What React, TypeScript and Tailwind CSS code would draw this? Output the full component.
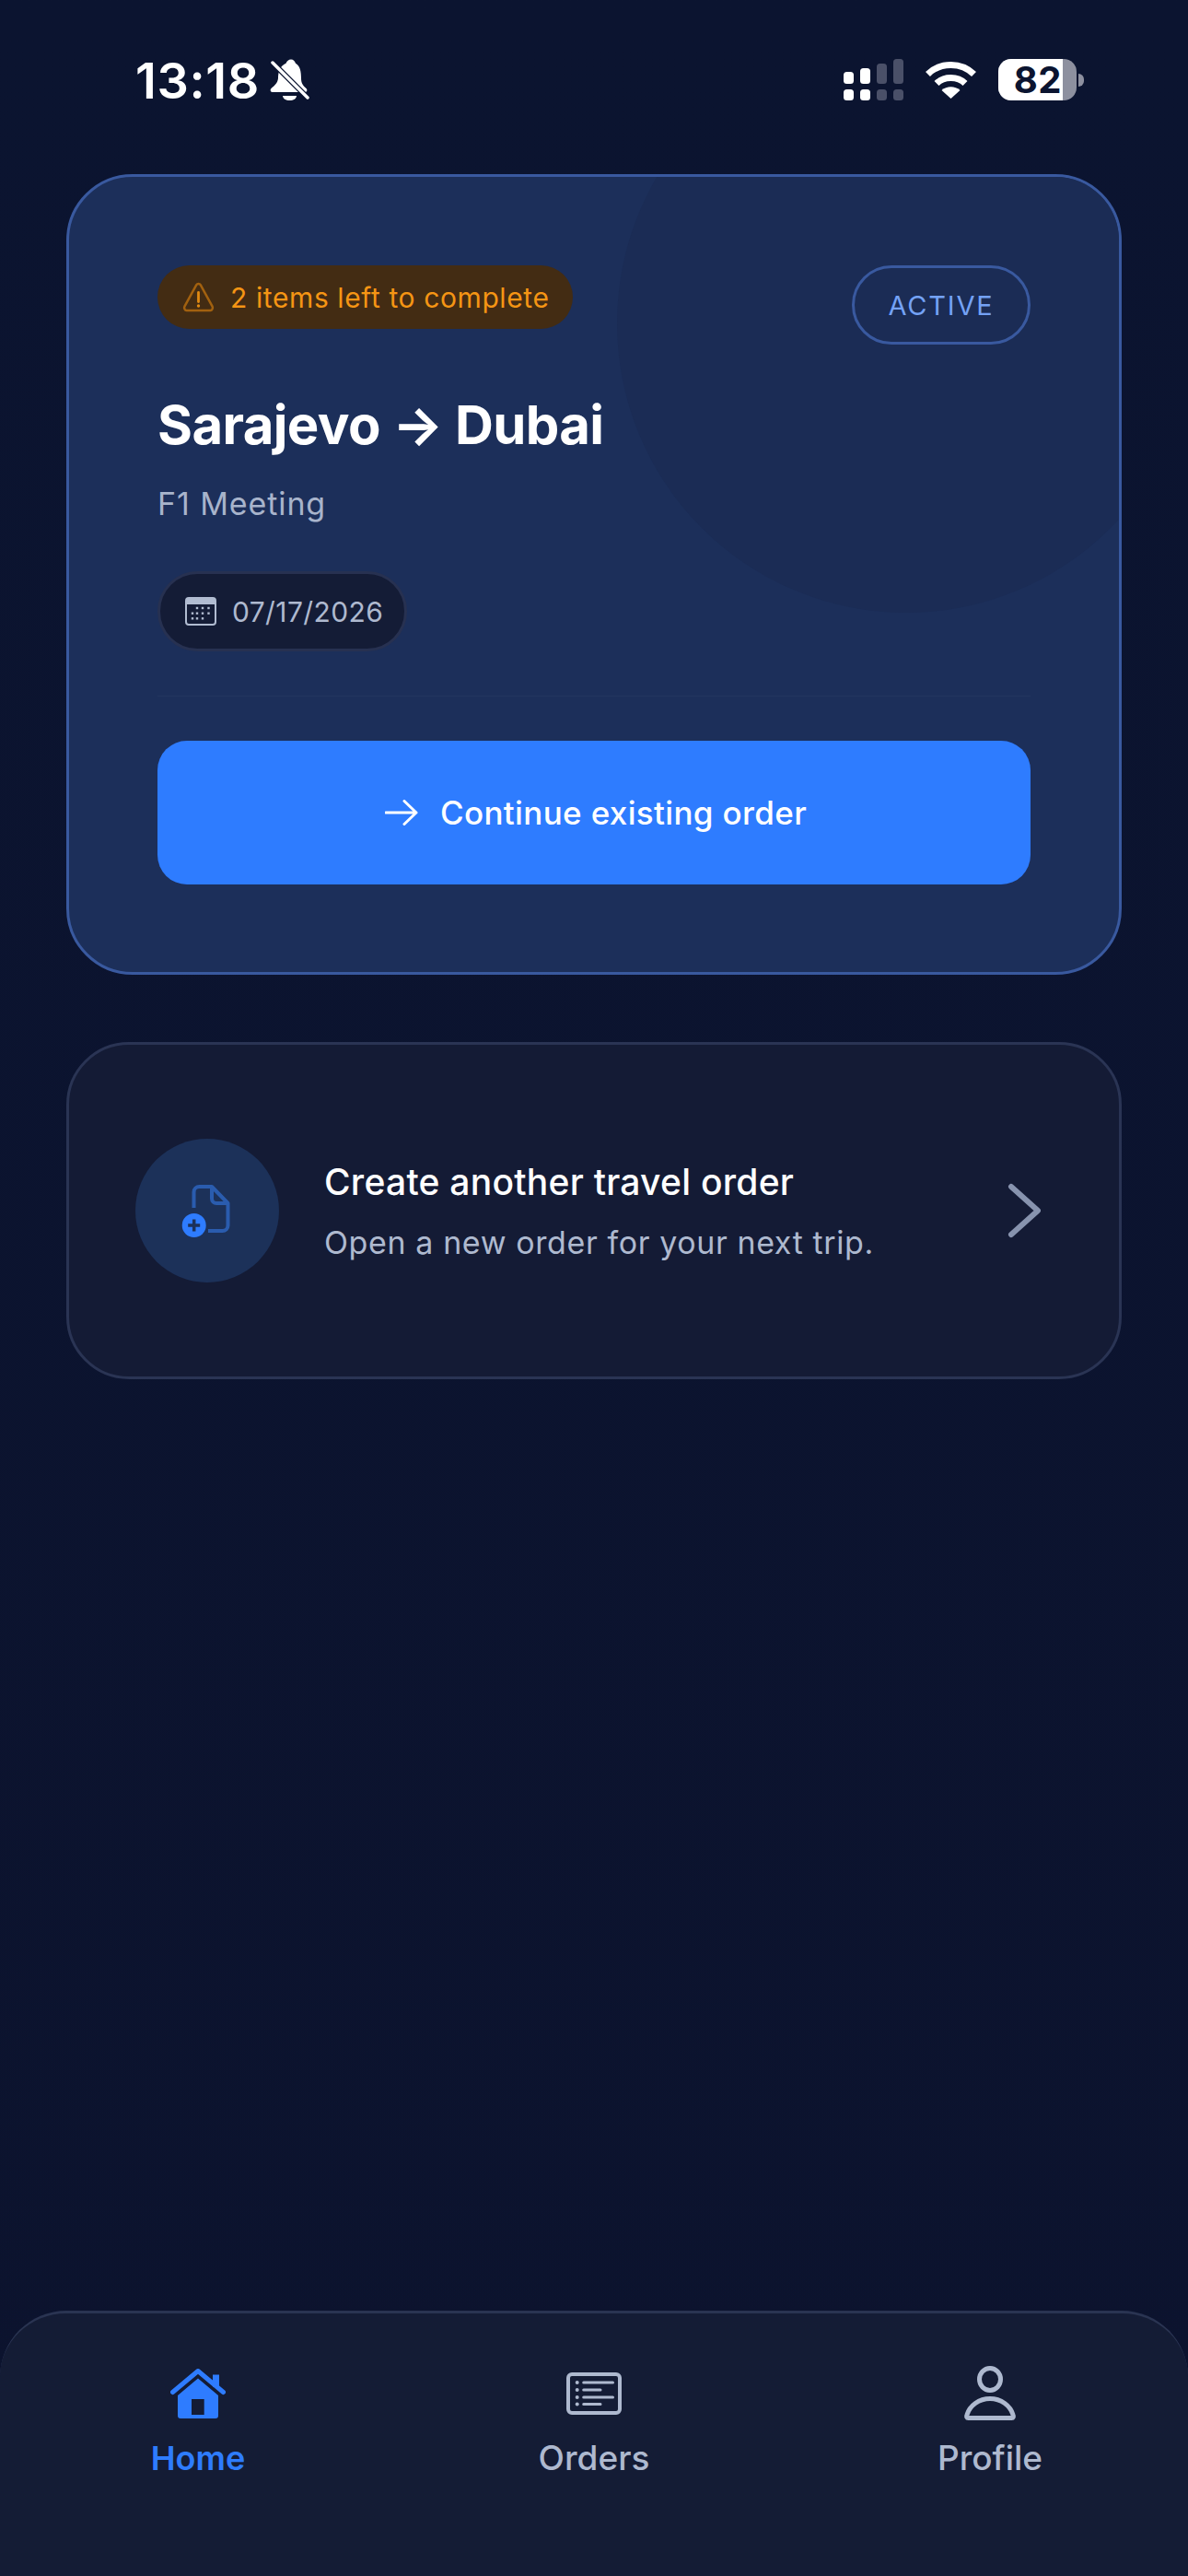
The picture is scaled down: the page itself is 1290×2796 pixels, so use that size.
const font = { fontFamily: "Inter, 'Noto Sans', sans-serif" };

function BellOff() {
  return (
    <svg width="43" height="45" viewBox="0 0 43 45" fill="none">
      <path
        d="M23 0.5c-2.5 0-4.5 1.8-5.5 4.2C11 7.5 9 14 9 21c-.5 5-4 8-7.5 11C0 33.5.5 36 3 36h35c2.500 0 3-2.500 1.500-4-3.500-3-5.500-6-5.500-11 0-7-1-13.500-6-16.300C27 2.300 25.500.5 23 .5z"
        fill="#fff"
      />
      <path d="M14 40h15c0 3-3.500 5-7.500 5S14 43 14 40z" fill="#fff" />
      <path d="M-1 0L40 41" stroke="#0b1430" strokeWidth="6" />
      <path d="M3 4L41 42" stroke="#fff" strokeWidth="3.500" strokeLinecap="round" />
    </svg>
  );
}

function Signal() {
  return (
    <svg width="65" height="45" viewBox="0 0 65 45">
      <rect x="0" y="33" width="11" height="12" rx="3.500" fill="#fff" />
      <rect x="18" y="33" width="11" height="12" rx="3.500" fill="#fff" />
      <rect x="36" y="33" width="11" height="12" rx="3.500" fill="#4a5068" />
      <rect x="54" y="33" width="11" height="12" rx="3.500" fill="#4a5068" />
      <rect x="0" y="14" width="11" height="13" rx="3.500" fill="#fff" />
      <rect x="18" y="10" width="11" height="17" rx="3.500" fill="#fff" />
      <rect x="36" y="5" width="11" height="22" rx="3.500" fill="#4a5068" />
      <rect x="54" y="0" width="11" height="27" rx="3.500" fill="#4a5068" />
    </svg>
  );
}

function Wifi() {
  return (
    <svg width="57" height="42" viewBox="0 0 57 42" fill="none">
      <path d="M3.500 15.500C17 2 40 2 53.500 15.500" stroke="#fff" strokeWidth="7" />
      <path d="M13 25.500C21 17.500 36 17.500 44 25.500" stroke="#fff" strokeWidth="7" />
      <path d="M28.500 42L18.500 33C24 28 33 28 38.500 33z" fill="#fff" />
    </svg>
  );
}

function WarningIcon() {
  return (
    <svg width="35" height="33" viewBox="0 0 35 33" fill="none">
      <path
        d="M15.300 3.200c1-1.600 3.400-1.600 4.400 0l12.900 23.500c.9 1.700-.3 4.300-2.200 4.300H4.600c-1.900 0-3.100-2.600-2.200-4.300z"
        stroke="#a2610f"
        strokeWidth="2.500"
      />
      <path d="M17.500 11.500v10" stroke="#e08a12" strokeWidth="2.800" strokeLinecap="round" />
      <circle cx="17.500" cy="26" r="1.700" fill="#e08a12" />
    </svg>
  );
}

function CalendarIcon() {
  return (
    <svg width="34" height="31" viewBox="0 0 34 31" fill="none">
      <rect x="1" y="1" width="32" height="29" rx="3" stroke="#b1bcd1" strokeWidth="2" />
      <path d="M1 4a3 3 0 0 1 3-3h26a3 3 0 0 1 3 3v4H1z" fill="#b1bcd1" />
      {[
        [13, 12],
        [19, 12],
        [25.5, 12],
        [8, 17.7],
        [13, 17.7],
        [19, 17.7],
        [25.5, 17.7],
        [8, 23.3],
        [13, 23.3],
        [19, 23.3],
      ].map(([cx, cy]) => (
        <rect key={`${cx}-${cy}`} x={cx - 1.2} y={cy - 1.2} width="2.400" height="2.400" fill="#b1bcd1" />
      ))}
    </svg>
  );
}

function ArrowIcon() {
  return (
    <svg width="36" height="28" viewBox="0 0 36 28" fill="none">
      <path d="M1 14H34M21 1.500L34 14 21 26.500" stroke="#fff" strokeWidth="3" strokeLinecap="round" strokeLinejoin="round" />
    </svg>
  );
}

function DocPlusIcon() {
  return (
    <svg width="56" height="60" viewBox="0 0 56 60" fill="none">
      <path
        d="M15.500 27V10a6 6 0 0 1 6-6H35l17.500 18v24a6 6 0 0 1-6 6H31"
        stroke="#2a5cae"
        strokeWidth="4"
        strokeLinejoin="round"
      />
      <path d="M35 4V17a5 5 0 0 0 5 5H52.500" stroke="#2a5cae" strokeWidth="4" />
      <circle cx="15.700" cy="46" r="13" fill="#2e7cff" />
      <path d="M15.700 39.500v13M9.200 46h13" stroke="#1c3159" strokeWidth="3.500" />
    </svg>
  );
}

function HomeIcon() {
  return (
    <svg width="60" height="54" viewBox="0 0 60 54" fill="none">
      <path d="M46 6.500h7v13h-7z" fill="#2e7cff" />
      <path d="M2.500 25.500L30 2.500l27.500 23" stroke="#2e7cff" strokeWidth="5" strokeLinecap="round" strokeLinejoin="round" />
      <path
        d="M30 10.500L52 29v22a3 3 0 0 1-3 3H11a3 3 0 0 1-3-3V29zM23 33v17h13.700V33z"
        fill="#2e7cff"
        fillRule="evenodd"
      />
    </svg>
  );
}

function OrdersIcon() {
  return (
    <svg width="60" height="46" viewBox="0 0 60 46" fill="none" stroke="#aeb9cf">
      <rect x="2" y="2" width="56" height="42" rx="4" strokeWidth="4" />
      <path d="M18.700 11H50.500M18.700 19H37M18.700 27H50.500M18.700 34.500H37" strokeWidth="3" strokeLinecap="round" />
      <g fill="#aeb9cf" stroke="none">
        <circle cx="11.700" cy="11" r="2" />
        <circle cx="11.700" cy="19" r="2" />
        <circle cx="11.700" cy="27" r="2" />
        <circle cx="11.700" cy="34.500" r="2" />
      </g>
    </svg>
  );
}

function ProfileIcon() {
  return (
    <svg width="56" height="60" viewBox="0 0 56 60" fill="none" stroke="#aeb9cf" strokeWidth="5">
      <ellipse cx="28" cy="14.500" rx="11.500" ry="12" />
      <path d="M4.500 56.500C2.700 56.500 2.300 55 3 53 6 43 16 35.500 28 35.500S50 43 53 53c.7 2 .3 3.500-1.500 3.500z" strokeLinejoin="round" />
    </svg>
  );
}

const tabs = [
  { label: "Home", icon: <HomeIcon />, color: "text-[#2e7cff] font-semibold text-[36px]" },
  { label: "Orders", icon: <OrdersIcon />, color: "text-[#aeb9cf] font-medium text-[37px]" },
  { label: "Profile", icon: <ProfileIcon />, color: "text-[#aeb9cf] font-medium text-[37px]" },
];

export default function App() {
  return (
    <div
      style={font}
      className="flex h-[2796px] w-[1290px] flex-col overflow-hidden bg-gradient-to-b from-[#0b1430] to-[#0c132e]"
    >
      <header className="flex h-[189px] shrink-0 items-start justify-between pl-[147px] pr-[113px] pt-[64px]">
        <div className="flex items-start gap-[13px]">
          <span className="w-[133px] text-[54px] font-semibold leading-[47px] tracking-[0.6px] text-white">13:18</span>
          <BellOff />
        </div>
        <div className="flex items-start">
          <Signal />
          <div className="ml-[23px] pt-[1px]">
            <Wifi />
          </div>
          <div className="ml-[23px] flex items-center">
            <div className="flex h-[45px] w-[85px] rounded-[14px] bg-[#8d909f]">
              <div className="flex h-full w-[70px] items-center justify-end rounded-l-[14px] bg-white pr-[1px] text-[40px] font-bold leading-none tracking-[0.5px] text-[#0b1430]">
                82
              </div>
            </div>
            <div className="ml-[2px] h-[14px] w-[6px] rounded-r-full bg-[#8d909f]" />
          </div>
        </div>
      </header>

      <main className="mx-[72px] flex flex-col gap-[73px]">
        <section className="relative overflow-hidden rounded-[72px] border-[3px] border-[#39599f] bg-[#1c2f5a] px-[96px] pb-[95px] pt-[96px]">
          <div className="absolute right-[-83px] top-[-155px] h-[628px] w-[628px] rounded-full bg-[#1b2c55]" />
          <div className="relative">
            <div className="flex h-[86px] items-start justify-between">
              <div className="flex h-[69px] items-center gap-[17px] rounded-full bg-[#432c13] pl-[27px] pr-[25px]">
                <WarningIcon />
                <span className="text-[30px] leading-none tracking-[0.6px] text-[#f59514]">2 items left to complete</span>
              </div>
              <div className="flex h-[86px] w-[194px] items-center justify-center rounded-full border-[3px] border-[#39599f] pt-[2px] text-[29px] tracking-[1.8px] text-[#74a2f5]">
                ACTIVE
              </div>
            </div>
            <h1 className="mt-[52px] text-[58px] font-bold leading-[70px] tracking-[-0.6px] text-white">
              Sarajevo → Dubai
            </h1>
            <p className="mt-[29px] text-[34px] leading-[44px] tracking-[0.9px] text-[#a8b4cb]">F1 Meeting</p>
            <div className="mt-[51px] flex h-[87px] w-[271px] items-center gap-[17px] rounded-full border-[3px] border-[#273151] bg-[#141c36] pl-[27px]">
              <CalendarIcon />
              <span className="text-[30px] leading-none tracking-[0.4px] text-[#aeb9cf]">07/17/2026</span>
            </div>
            <div className="mt-[48px] h-[1px] bg-[#23365f]" />
            <button className="mt-[48px] flex h-[156px] w-full items-center justify-center gap-[24px] rounded-[32px] bg-[#2e7cff] pl-[4px] text-[35px] font-medium tracking-[0.35px] text-white">
              <ArrowIcon />
              Continue existing order
            </button>
          </div>
        </section>

        <section className="flex h-[366px] items-center rounded-[68px] border-[3px] border-[#2a3454] bg-[#141b35] pl-[72px] pr-[85px]">
          <div className="flex h-[156px] w-[156px] shrink-0 items-center justify-center rounded-full bg-[#1c3159] pr-[4px]">
            <DocPlusIcon />
          </div>
          <div className="ml-[49px] flex flex-col gap-[16px] pt-[2px]">
            <h2 className="text-[39px] font-[450] leading-[52px] tracking-[0.25px] text-white">Create another travel order</h2>
            <p className="text-[34px] leading-[48px] tracking-[0.6px] text-[#aeb9cf]">Open a new order for your next trip.</p>
          </div>
          <svg className="ml-auto shrink-0" width="36" height="60" viewBox="0 0 36 60" fill="none">
            <path d="M4 4L33 30 4 56" stroke="#8793ae" strokeWidth="6" strokeLinecap="round" strokeLinejoin="round" />
          </svg>
        </section>
      </main>

      <nav className="mt-auto grid h-[288px] shrink-0 grid-cols-3 rounded-t-[72px] border-t-[3px] border-[#2a3452] bg-[#141c35] pt-[57px]">
        {tabs.map((tab) => (
          <div key={tab.label} className="flex flex-col items-center">
            <div className="flex h-[60px] items-center justify-center">{tab.icon}</div>
            <span className={`mt-[18px] leading-[44px] ${tab.color}`}>{tab.label}</span>
          </div>
        ))}
      </nav>
    </div>
  );
}
